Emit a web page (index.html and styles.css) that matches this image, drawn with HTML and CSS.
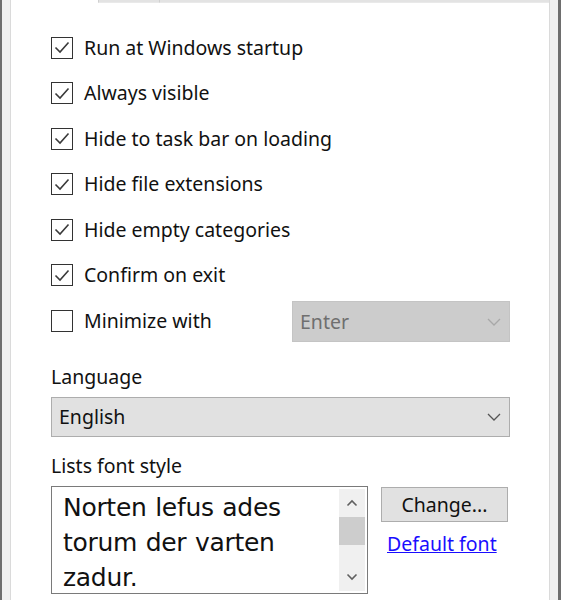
FILE: index.html
```html
<!DOCTYPE html>
<html>
<head>
<meta charset="utf-8">
<link rel="stylesheet" href="styles.css">
</head>
<body>
<div class="window">
  <div class="frame-left"></div>
  <div class="panel">
    <div class="tabstrip">
      <div class="tab-active"></div>
      <div class="tab"></div>
      <div class="tab tab-rest"></div>
    </div>
    <div class="content">
      <div class="options">
        <label class="row"><span class="box checked"><svg viewBox="0 0 22 22" width="22" height="22"><path d="M4.5 11.5 L9 16 L17.5 6.5" fill="none" stroke="#3a3a3a" stroke-width="1.6"/></svg></span><span class="lbl">Run at Windows startup</span></label>
        <label class="row"><span class="box checked"><svg viewBox="0 0 22 22" width="22" height="22"><path d="M4.5 11.5 L9 16 L17.5 6.5" fill="none" stroke="#3a3a3a" stroke-width="1.6"/></svg></span><span class="lbl">Always visible</span></label>
        <label class="row"><span class="box checked"><svg viewBox="0 0 22 22" width="22" height="22"><path d="M4.5 11.5 L9 16 L17.5 6.5" fill="none" stroke="#3a3a3a" stroke-width="1.6"/></svg></span><span class="lbl">Hide to task bar on loading</span></label>
        <label class="row"><span class="box checked"><svg viewBox="0 0 22 22" width="22" height="22"><path d="M4.5 11.5 L9 16 L17.5 6.5" fill="none" stroke="#3a3a3a" stroke-width="1.6"/></svg></span><span class="lbl">Hide file extensions</span></label>
        <label class="row"><span class="box checked"><svg viewBox="0 0 22 22" width="22" height="22"><path d="M4.5 11.5 L9 16 L17.5 6.5" fill="none" stroke="#3a3a3a" stroke-width="1.6"/></svg></span><span class="lbl">Hide empty categories</span></label>
        <label class="row"><span class="box checked"><svg viewBox="0 0 22 22" width="22" height="22"><path d="M4.5 11.5 L9 16 L17.5 6.5" fill="none" stroke="#3a3a3a" stroke-width="1.6"/></svg></span><span class="lbl">Confirm on exit</span></label>
        <div class="row">
          <label class="minimize"><span class="box"></span><span class="lbl">Minimize with</span></label>
          <div class="select disabled"><span>Enter</span><svg class="chev" viewBox="0 0 14 8" width="14" height="8"><path d="M1 1 L7 7 L13 1" fill="none" stroke="#a8a8a8" stroke-width="1.3"/></svg></div>
        </div>
      </div>

      <div class="field-label lang-label">Language</div>
      <div class="select lang"><span>English</span><svg class="chev" viewBox="0 0 14 8" width="14" height="8"><path d="M1 1 L7 7 L13 1" fill="none" stroke="#555" stroke-width="1.3"/></svg></div>

      <div class="field-label font-label">Lists font style</div>
      <div class="font-row">
        <div class="preview">
          <div class="preview-text">Norten lefus ades torum der varten zadur.</div>
          <div class="scrollbar">
            <svg class="arrow" viewBox="0 0 12 8" width="12" height="8"><path d="M1.5 6.5 L6 2 L10.5 6.5" fill="none" stroke="#606060" stroke-width="1.6"/></svg>
            <div class="thumb"></div>
            <div class="track"></div>
            <svg class="arrow" viewBox="0 0 12 8" width="12" height="8"><path d="M1.5 1.5 L6 6 L10.5 1.5" fill="none" stroke="#606060" stroke-width="1.6"/></svg>
          </div>
        </div>
        <div class="font-actions">
          <button class="btn">Change...</button>
          <a class="link" href="#">Default font</a>
        </div>
      </div>
    </div>
  </div>
  <div class="frame-right"></div>
</div>
</body>
</html>
```

FILE: styles.css
```css
html, body {
  margin: 0;
  padding: 0;
  width: 561px;
  height: 600px;
  overflow: hidden;
  background: #f0f0f0;
  font-family: "Noto Sans", "Open Sans", sans-serif;
  color: #111;
}

.window {
  display: flex;
  width: 561px;
  height: 600px;
}

.frame-left {
  width: 8px;
  flex: none;
  border-left: 2px solid #6e6e6e;
  background: #f0f0f0;
}

.frame-right {
  width: 8px;
  flex: none;
  border-right: 3px solid #6e6e6e;
  background: #f0f0f0;
}

.panel {
  flex: 1;
  background: #fff;
  border-left: 1px solid #dadada;
  border-right: 1px solid #dadada;
  display: flex;
  flex-direction: column;
  min-width: 0;
}

.tabstrip {
  display: flex;
  height: 3px;
  flex: none;
}

.tab-active {
  width: 87px;
  background: #fff;
}

.tab {
  width: 61px;
  background: #e3e3e3;
  border-left: 1px solid #d0d0d0;
  border-bottom: 1px solid #e9e9e9;
  box-sizing: border-box;
}

.tab-rest {
  flex: 1;
}

.content {
  padding: 0 0 0 40px;
  display: flex;
  flex-direction: column;
}

.options {
  display: flex;
  flex-direction: column;
  padding-top: 22px;
}

.row {
  display: flex;
  align-items: center;
  height: 45.5px;
}

.minimize {
  display: flex;
  align-items: center;
  width: 241px;
}

.box {
  width: 22px;
  height: 22px;
  box-sizing: border-box;
  border: 1.5px solid #333;
  background: #fff;
  flex: none;
  position: relative;
}

.box svg {
  position: absolute;
  left: -1.5px;
  top: -1.5px;
}

.lbl {
  margin-left: 11px;
  font-size: 19.5px;
  line-height: 26px;
  color: #111;
}

.select {
  box-sizing: border-box;
  display: flex;
  align-items: center;
  justify-content: space-between;
  font-size: 19.5px;
  padding: 0 8px 0 7px;
}

.select.disabled {
  width: 218px;
  height: 41px;
  background: #cccccc;
  border: 1px solid #c4c4c4;
  color: #6f6f6f;
  margin-top: 2px;
}

.select.lang {
  width: 459px;
  height: 40px;
  background: #e1e1e1;
  border: 1px solid #adadad;
  color: #111;
  margin-top: 7px;
  padding-right: 8px;
}

.field-label {
  font-size: 19.5px;
  line-height: 26px;
  color: #111;
}

.lang-label {
  margin-top: 20px;
}

.font-label {
  margin-top: 16px;
}

.font-row {
  display: flex;
  gap: 13px;
  margin-top: 7px;
}

.preview {
  width: 317px;
  height: 108px;
  box-sizing: border-box;
  border: 1.5px solid #7a7a7a;
  display: flex;
  background: #fff;
  overflow: hidden;
}

.preview-text {
  flex: 1;
  padding: 3px 0 0 11px;
  font-family: "DejaVu Sans", sans-serif;
  font-size: 25px;
  line-height: 35px;
  color: #111;
  letter-spacing: -0.3px;
  word-spacing: 1px;
}

.scrollbar {
  width: 26px;
  margin: 2px 2px 2px 0;
  background: #f0f0f0;
  display: flex;
  flex-direction: column;
  align-items: center;
}

.scrollbar .arrow {
  flex: none;
  margin: 10px 0;
}

.thumb {
  width: 26px;
  height: 28px;
  background: #cdcdcd;
  flex: none;
}

.track {
  flex: 1;
}

.font-actions {
  display: flex;
  flex-direction: column;
  align-items: flex-start;
}

.btn {
  width: 127px;
  height: 35px;
  margin-top: 1px;
  background: #e1e1e1;
  border: 1px solid #adadad;
  font-family: "Noto Sans", "Open Sans", sans-serif;
  font-size: 19.5px;
  color: #111;
  padding: 0;
}

.link {
  margin-top: 8px;
  margin-left: 6px;
  font-size: 19.5px;
  color: #1a0dff;
  text-decoration: underline;
}
```
